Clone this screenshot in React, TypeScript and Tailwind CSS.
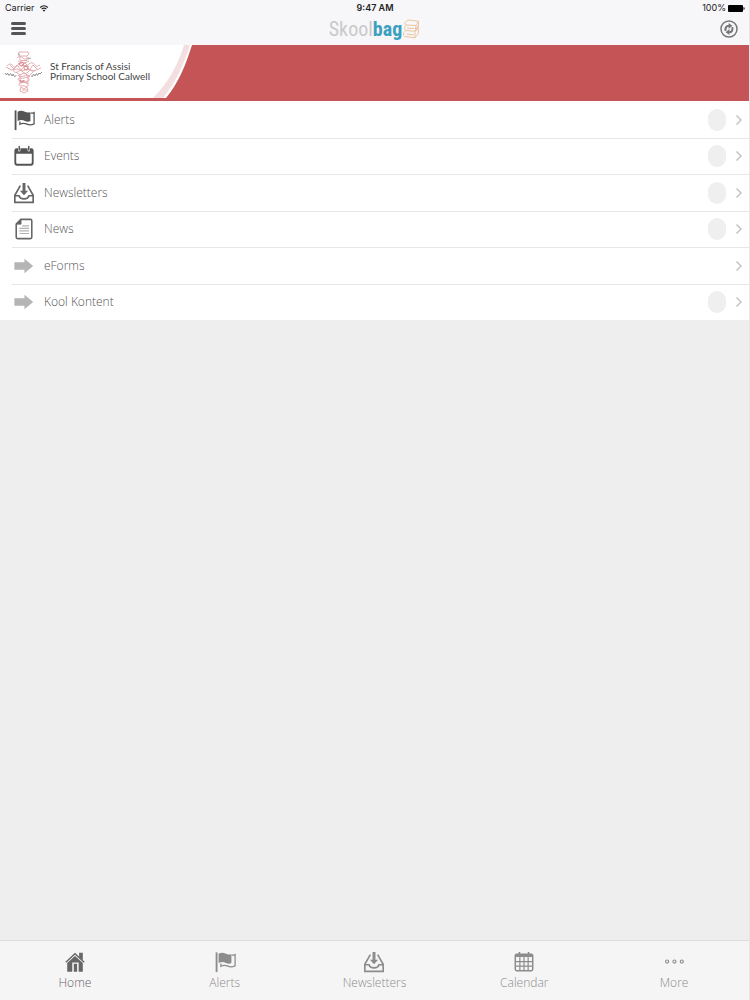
import React from "react";

interface IconProps {
  className?: string;
}

const FlagIcon: React.FC<IconProps> = ({ className }) => (
  <svg viewBox="0 0 24 24" className={className} fill="none" stroke="currentColor" aria-hidden="true">
    <path d="M2.800 1.500v21.500" strokeWidth="2" />
    <path
      d="M5 3c3-1.800 5.500-1.200 8 0 2 1 4 1.100 6 .2v10c-2.200.9-4 .7-6-.2-2.500-1.200-5-1.600-8 .2z"
      fill="currentColor"
      stroke="none"
    />
    <path
      d="M19.500 4.500c1.200.2 2.200 0 3.500-.6v12.300c-2.800 1.400-5.300 1.500-7.800.3-2.400-1.100-4.700-1.500-7.700.2v-3.200"
      strokeWidth="1.400"
    />
  </svg>
);

const EventIcon: React.FC<IconProps> = ({ className }) => (
  <svg viewBox="0 0 24 24" className={className} aria-hidden="true">
    <path
      fill="currentColor"
      fillRule="evenodd"
      d="M4 3.500h1.500v2.200a1.300 1.300 0 0 0 2.600 0V3.500h7.800v2.200a1.300 1.300 0 0 0 2.600 0V3.500H20A2.500 2.500 0 0 1 22.500 6v14a2.500 2.500 0 0 1-2.500 2.500H4A2.500 2.500 0 0 1 1.500 20V6A2.500 2.500 0 0 1 4 3.500zm-.5 6v9.500c0 1 .6 1.500 1.500 1.500h14c.9 0 1.500-.5 1.500-1.500V9.500z"
    />
    <path d="M6.800 1.500v4M17.200 1.500v4" stroke="currentColor" strokeWidth="1.600" strokeLinecap="round" />
  </svg>
);

const InboxIcon: React.FC<IconProps> = ({ className }) => (
  <svg viewBox="0 0 24 24" className={className} fill="none" stroke="currentColor" strokeWidth="1.800" aria-hidden="true">
    <path d="M8 4L2 14.500v7.700h20v-7.700L16 4" />
    <path d="M2 15h4.600c.8 2.800 2.400 3.400 5.400 3.400s4.600-.6 5.400-3.400H22" />
    <path d="M10.400 1h3.200v8.500h2.900L12 14.500 7.500 9.500h2.900z" fill="currentColor" stroke="none" />
  </svg>
);

const NewsIcon: React.FC<IconProps> = ({ className }) => (
  <svg viewBox="0 0 24 24" className={className} fill="none" stroke="currentColor" aria-hidden="true">
    <path d="M8.500 1.500H19a1.500 1.500 0 0 1 1.500 1.500v18a1.500 1.500 0 0 1-1.500 1.500H5A1.500 1.500 0 0 1 3.500 21V6.500z" strokeWidth="1.700" />
    <path d="M8.800 1.700v5H3.500z" fill="currentColor" strokeWidth="0.800" />
    <path d="M10 8.500h7.500M7 11.300h10.500M7 14.100h10.500M7 16.900h10.500" strokeWidth="1.300" opacity="0.500" />
  </svg>
);

const ArrowIcon: React.FC<IconProps> = ({ className }) => (
  <svg viewBox="0 0 24 24" className={className} fill="currentColor" aria-hidden="true">
    <path d="M1.500 8h11V4L22 12l-9.500 8v-4h-11z" />
  </svg>
);

const HomeIcon: React.FC<IconProps> = ({ className }) => (
  <svg viewBox="0 0 24 24" className={className} aria-hidden="true">
    <path
      fill="currentColor"
      fillRule="evenodd"
      d="M12 5.500l8.500 7.500v9.500H16V12.500H9v10H3.500V13zM10.700 14h3.600v8.500h-3.600z"
    />
    <path d="M2 12.200L12 3l10 9.200" fill="none" stroke="currentColor" strokeWidth="1.600" />
    <path d="M16.500 2h4v8l-4-3.500z" fill="currentColor" />
  </svg>
);

const CalendarIcon: React.FC<IconProps> = ({ className }) => (
  <svg viewBox="0 0 24 24" className={className} fill="none" stroke="currentColor" aria-hidden="true">
    <rect x="2.500" y="3.500" width="19" height="18" rx="1.500" strokeWidth="1.600" />
    <path d="M2.500 5h19" strokeWidth="3" />
    <path d="M2.500 11.500h19M2.500 16.500h19M7.500 6.500v15M12 6.500v15M16.500 6.500v15" strokeWidth="1.300" />
    <path d="M7 1v4M17 1v4" strokeWidth="1.800" />
  </svg>
);

const MoreIcon: React.FC<IconProps> = ({ className }) => (
  <svg viewBox="0 0 24 24" className={className} fill="none" stroke="currentColor" strokeWidth="1.200" aria-hidden="true">
    <circle cx="4.500" cy="11.500" r="1.700" />
    <circle cx="12.500" cy="11.500" r="1.700" />
    <circle cx="20.500" cy="11.500" r="1.700" />
  </svg>
);

const RefreshIcon: React.FC<IconProps> = ({ className }) => (
  <svg viewBox="0 0 24 24" className={className} fill="none" stroke="currentColor" aria-hidden="true">
    <circle cx="12" cy="12" r="10.700" strokeWidth="2" />
    <path d="M7.600 14.500C6.500 10.500 8.500 7.600 12 7.600M16.400 9.500c1.100 4-.9 6.900-4.400 6.900" strokeWidth="2.800" />
    <path d="M11.500 4l5 3.600-5 4.400zM12.500 12v8l-5-3.600z" fill="currentColor" stroke="none" />
  </svg>
);

const WifiIcon: React.FC<IconProps> = ({ className }) => (
  <svg viewBox="0 0 12 9" className={className} fill="none" stroke="currentColor" strokeWidth="1.500" aria-hidden="true">
    <path d="M1 3.200c3-2.700 7-2.700 10 0M2.900 5.300c2-1.700 4.200-1.700 6.200 0" />
    <path d="M4.300 6.800c1-.9 2.400-.9 3.400 0L6 8.700z" fill="currentColor" stroke="none" />
  </svg>
);

const BooksIcon: React.FC<IconProps> = ({ className }) => (
  <svg viewBox="0 0 18 20" className={className} fill="none" stroke="#ecc4a0" aria-hidden="true">
    <path d="M3.500 3L6 1l10.500 1.300L14 6.500 4.500 6C2.500 5.500 2.500 3.600 3.500 3zM16.500 2.300v4L14 10.500v-4" />
    <path d="M4.500 6.500C2 7.500 2 11 4 11.500l9.500.8V8M13.500 12.300l3-4V6" />
    <path d="M3.500 12C1 13 1 17 3 17.600l10 1.200v-5.500M13 18.800l3.300-4.300V9M5 9l7 .6M4.500 15l7 .8" />
  </svg>
);

const CrossLogo: React.FC<IconProps> = ({ className }) => (
  <svg viewBox="0 0 40 44" className={className} fill="none" stroke="#e2a3a7" strokeWidth="0.900" role="img" aria-label="School crest">
    <path d="M15 2h9l1 2-2 2h-7l-2-2zM13 8c2-2 4-2 6 0s5 1 6-1M16 6.500v4h7v-4M14 11c2 2 9 2 11 0" />
    <path d="M3 16c2-3 5-2 6 0s4 1 5-1 4-2 5 0 4 1 6-1 5-1 6 1 3 1 5 0M2 17l5 3 6-1 5 2 6-2 6 2 7-3" />
    <path d="M14 13l3 3 4-3 4 4M6 15l4 4 3-4 4 5 4-5 4 5 4-5 4 4" />
    <path d="M9 20c1 3 4 3 6 1s4 1 5 2 4 0 5-2 4 2 6-1M12 22l4 3 4-2 5 3 4-4" />
    <path d="M14 25c1 2 4 2 6 1s4 0 6 1M14 29c2-2 4 0 6-1s4-1 5 1-2 3-5 2-5 1-6-2zM16 25v8l3-2 5 3v-9" />
    <path d="M15 34c2-2 8-2 9 0s-1 3-4 2-5 1-5-2zM17 37l-1 4 4 2 4-2-1-4-3 2zM18 40h5" />
    <path d="M15.500 14a2 2 0 1 0 4 0 2 2 0 1 0-4 0M20 18a2 2 0 1 0 4 0 2 2 0 1 0-4 0M16 30a2 2 0 1 0 4 0" stroke="#cf7d83" />
    <path d="M14 5l2-1M24 9l3-1" stroke="#999" />
    <path d="M1 23l1.500 2 1-2 1.500 2.500 1.500-2 1.500 2.500 1-2 1.500 2.500 2-1M27 26l1.500.5 1-2.500 1.500 2 1.500-2.500 1 2 1.500-2.500 1 1 2-2" stroke="#888" />
  </svg>
);

const Chevron = () => (
  <svg viewBox="0 0 8 12" className="h-3 w-2 text-[#c4c4c6]" fill="none" stroke="currentColor" strokeWidth="1.500" aria-hidden="true">
    <path d="M1.500 1.500L6 6l-4.500 4.500" />
  </svg>
);

const menuItems = [
  { label: "Alerts", Icon: FlagIcon, color: "text-[#555]", badge: true },
  { label: "Events", Icon: EventIcon, color: "text-[#555]", badge: true },
  { label: "Newsletters", Icon: InboxIcon, color: "text-[#666]", badge: true },
  { label: "News", Icon: NewsIcon, color: "text-[#666]", badge: true },
  { label: "eForms", Icon: ArrowIcon, color: "text-[#b5b5b5]", badge: false },
  { label: "Kool Kontent", Icon: ArrowIcon, color: "text-[#b5b5b5]", badge: true },
];

const tabs = [
  { label: "Home", Icon: HomeIcon, active: true },
  { label: "Alerts", Icon: FlagIcon, active: false },
  { label: "Newsletters", Icon: InboxIcon, active: false },
  { label: "Calendar", Icon: CalendarIcon, active: false },
  { label: "More", Icon: MoreIcon, active: false },
];

const Header = () => (
  <header className="bg-[#f7f6f9]">
    <div className="grid h-4 grid-cols-3 items-center pr-1 pl-[5px] font-[Inter,'Liberation_Sans',sans-serif] text-[9px] leading-4 text-[#222]">
      <span className="flex items-center gap-1">
        Carrier
        <WifiIcon className="h-[7px] w-[10px]" />
      </span>
      <span className="text-center font-semibold">9:47 AM</span>
      <span className="flex items-center justify-end gap-[2px]">
        100%
        <svg viewBox="0 0 17 7" className="h-[7px] w-[17px]" fill="#000" aria-hidden="true">
          <rect width="15" height="7" rx="1" />
          <path d="M15.500 2c1.500.3 1.500 2.700 0 3z" />
        </svg>
      </span>
    </div>
    <div className="grid h-[29px] grid-cols-3 items-center px-[11px] pb-1">
      <button type="button" aria-label="Menu" className="flex w-[15px] flex-col gap-[2px]">
        <span className="h-[3px] rounded-full bg-[#555558]" />
        <span className="h-[3px] rounded-full bg-[#555558]" />
        <span className="h-[3px] rounded-full bg-[#555558]" />
      </button>
      <div className="flex items-center justify-center font-['Liberation_Sans_Narrow','Roboto_Condensed',Roboto,sans-serif] text-xl leading-6">
        <span className="text-[#c9c9cb]">Skool</span>
        <span className="font-bold text-[#3b9fc0]">bag</span>
        <BooksIcon className="h-5 w-[18px]" />
      </div>
      <button type="button" aria-label="Refresh" className="justify-self-end text-[#77777a]">
        <RefreshIcon className="h-[18px] w-[18px]" />
      </button>
    </div>
  </header>
);

const Banner = () => (
  <div className="flex h-14 bg-[#c45456] pb-[3px]">
    <div className="flex items-center gap-[6px] bg-white pl-1">
      <CrossLogo className="h-11 w-10" />
      <p className="w-[103px] pb-[2px] font-[Lato,sans-serif] text-[10px] leading-[10px] whitespace-nowrap text-[#444]">
        St Francis of Assisi
        <br />
        Primary School Calwell
      </p>
    </div>
    <svg viewBox="0 0 40 53" className="h-full w-10" aria-hidden="true">
      <path d="M0 0h39C33 19 26 37 13 53H0z" fill="#fff" />
      <path d="M31 0h6C31 19 23 37 10 53H0C15 38 25 20 31 0z" fill="#f3dfdf" />
    </svg>
  </div>
);

const App: React.FC = () => {
  return (
    <div className="flex min-h-screen flex-col border-r border-[#e9e4e8] bg-[#efeeef] font-['Open_Sans',sans-serif]">
      <Header />
      <Banner />
      <ul className="grid h-[219px] grid-rows-6 bg-white">
        {menuItems.map(({ label, Icon, color, badge }) => (
          <li key={label} className="ml-3 border-t border-[#e8e7e8] first:border-white">
            <a href="#" className="flex h-full items-center pr-[6px]">
              <Icon className={`h-[22px] w-6 ${color}`} />
              <span className="ml-2 flex-1 text-[12px] leading-4 font-light text-[#555]">{label}</span>
              {badge && <span className="mr-[9px] h-[22px] w-[18px] rounded-[9px] bg-[#f0eff0]" />}
              <Chevron />
            </a>
          </li>
        ))}
      </ul>
      <nav className="mt-auto grid h-[60px] grid-cols-5 border-t border-[#dddcdd] bg-[#f6f5f6]">
        {tabs.map(({ label, Icon, active }) => (
          <button
            key={label}
            type="button"
            className={`flex flex-col items-center justify-center gap-[2px] ${
              active ? "text-[#666]" : "text-[#8c8c8c]"
            }`}
          >
            <Icon className="h-[22px] w-[22px]" />
            <span className="text-[12px] leading-4 font-light">{label}</span>
          </button>
        ))}
      </nav>
    </div>
  );
};

export default App;
